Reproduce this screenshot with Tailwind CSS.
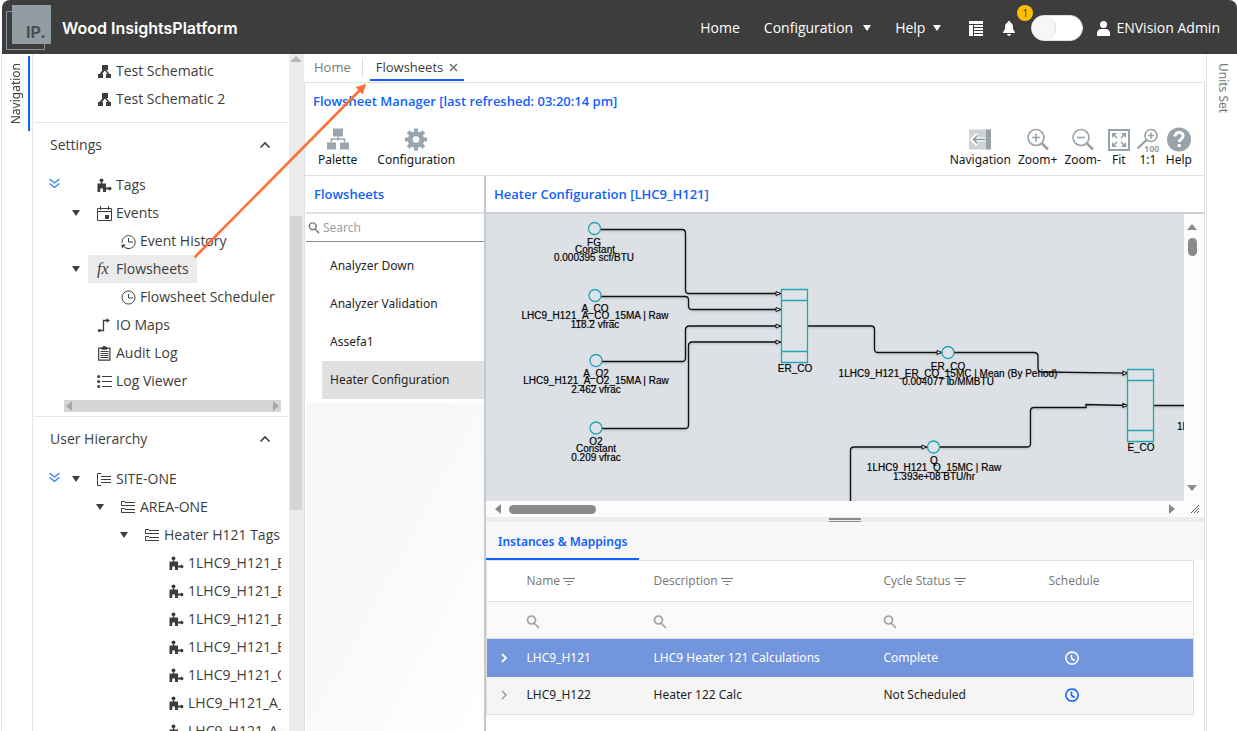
<!DOCTYPE html>
<html lang="en">
<head>
    <meta charset="UTF-8">
    <meta name="viewport" content="width=device-width, initial-scale=1.0">
    <title>Wood InsightsPlatform</title>
    <script src="https://cdn.jsdelivr.net/npm/@tailwindcss/browser@4"></script>
</head>
<body class="relative flex h-screen flex-col overflow-hidden bg-white pl-[2px] font-['Open_Sans',sans-serif] text-sm text-[#3d3d3d]">

    <!-- shared icons -->
    <svg class="hidden">
        <symbol id="i-schematic" viewBox="0 0 15 15"><path d="M5 1h6v5H9.5l3 4H14v4H9v-4h1.500L8 6.500 5 10h1v4H1v-4h1.500l3-4H5z"/></symbol>
        <symbol id="i-tag" viewBox="0 0 15 15"><circle cx="4.500" cy="2.300" r="1.900"/><path d="M3.800 3h1.400v2.500H9V9.500h2.300a1.700 1.700 0 1 1 0 2H9V14H6v-2.300a1.400 1.400 0 0 0-2.800 0V14H.5V5.500h3.300z"/></symbol>
        <symbol id="i-events" viewBox="0 0 15 15"><path d="M.5 2.500h14v12H.5zM.5 5.500h14M3.500 0v4M11.500 0v4" fill="none" stroke="currentColor"/><path d="M8 9h4v4H8z"/></symbol>
        <symbol id="i-clock" viewBox="0 0 15 15"><path d="M7.500 1a6.500 6.500 0 1 0 .01 0zM7.500 4v4H12" fill="none" stroke="currentColor"/></symbol>
        <symbol id="i-history" viewBox="0 0 15 15"><path d="M2.600 12.200A6.500 6.500 0 1 0 1.200 9M7.500 4v4H12M5 14a6.500 6.500 0 0 0 2.500.5" fill="none" stroke="currentColor"/><path d="M.5 10.500h4.200L1 14.500z"/></symbol>
        <symbol id="i-io" viewBox="0 0 15 15"><path d="M2.500 12.500h4v-10h3.500" fill="none" stroke="currentColor" stroke-width="1.300"/><circle cx="2.300" cy="12.500" r="1.500"/><path d="M9.500 .3l3.500 2.200-3.500 2.200z"/></symbol>
        <symbol id="i-audit" viewBox="0 0 15 15"><path d="M1.700 2.200h11.200v12H1.700zM3.500 5.500h8M3.500 7.500h8M3.500 9.500h8M3.500 11.500h8" fill="none" stroke="currentColor" stroke-width="1.200"/><path d="M4.500 1h1.500a1.300 1.300 0 0 1 2.600 0h1.500v2.800H4.500z"/></symbol>
        <symbol id="i-list" viewBox="0 0 15 15"><circle cx="1.700" cy="2.500" r="1.500"/><circle cx="1.700" cy="7.500" r="1.500"/><circle cx="1.700" cy="12.500" r="1.500"/><path d="M5 2.500h10M5 7.500h10M5 12.500h10" fill="none" stroke="currentColor"/></symbol>
        <symbol id="i-site" viewBox="0 0 15 15"><path d="M4 1.500H.5v12H4M4 4.500h10M4 7.500h10M4 10.500h10" fill="none" stroke="currentColor"/></symbol>
        <symbol id="i-area" viewBox="0 0 15 15"><path d="M4 1.500H.5v4H4M4 2.500h10M4 5.500h10M4 8.500H.5v4H4M4 9.500h10M4 12.500h10" fill="none" stroke="currentColor"/></symbol>
        <symbol id="i-expand" viewBox="0 0 10 10"><path d="M.5 1L5 4.500 9.500 1M.5 5L5 8.500 9.500 5" fill="none" stroke="#4285f4" stroke-width="1.300"/></symbol>
        <symbol id="i-tri" viewBox="0 0 8 6"><path d="M0 0h8L4 6z"/></symbol>
        <symbol id="i-search" viewBox="0 0 14 14"><path d="M5.500 1a4 4 0 1 0 .01 0zM8.500 8.500l4.500 4.500" fill="none" stroke="currentColor" stroke-width="1.600"/></symbol>
        <symbol id="i-filter" viewBox="0 0 12 8"><path d="M0 .5h12M2 3.500h8M4.500 6.500h3" fill="none" stroke="currentColor"/></symbol>
        <symbol id="i-collapse" viewBox="0 0 12 8"><path d="M1.500 6.500l4.500-4.500 4.500 4.500" fill="none" stroke="currentColor" stroke-width="1.600"/></symbol>
        <symbol id="i-time" viewBox="0 0 14 14"><path d="M7 .9a6.100 6.100 0 1 0 .01 0zM6.500 3.500V7.500l3.200 2" fill="none" stroke="currentColor" stroke-width="1.500"/></symbol>
    </svg>

    <header class="flex h-[54px] shrink-0 items-center rounded-t-lg bg-[#3d3d3d] pt-[2px] pr-[17px] text-white">
        <svg class="ml-1 h-[46px] w-[46px]" viewBox="0 0 46 46">
            <path d="M.5 6.500h38v38H.5z" fill="none" stroke="#8b979e"/>
            <path d="M6 0h39v39H6z" fill="#919ca3"/>
            <text x="20" y="33" font-family="Inter, sans-serif" font-size="16" font-weight="700" fill="#4a4f52">IP.</text>
        </svg>
        <a href="#" class="ml-[10px] font-['Inter',sans-serif] text-base font-semibold">Wood InsightsPlatform</a>
        <nav class="ml-auto flex items-center">
            <a href="#">Home</a>
            <button class="ml-6 flex items-center gap-2">Configuration <svg class="ml-[2px] h-[6px] w-2 fill-current"><use href="#i-tri"/></svg></button>
            <button class="ml-6 flex items-center gap-2">Help <svg class="h-[6px] w-2 fill-current"><use href="#i-tri"/></svg></button>
            <button class="ml-7" aria-label="News">
                <svg class="h-[15px] w-[14px]" viewBox="0 0 14 15" fill="#fff"><path d="M0 0h14v3H0zM0 4h4v11H0zM5 4h9v2H5zM5 7h9v2H5zM5 10h9v2H5zM5 13h9v2H5z"/></svg>
            </button>
            <button class="relative ml-5" aria-label="Notifications">
                <svg class="h-[15px] w-[12px]" viewBox="0 0 12 15" fill="#fff"><path d="M6 0c1 0 1.300.7 1.300 1.500C9.300 2 10 4 10 6c0 2.500.7 3.700 2 5v1H0v-1c1.300-1.300 2-2.500 2-5 0-2 .7-4 2.700-4.500C4.700.7 5 0 6 0zM4 13h4c0 1-1 1.800-2 1.800S4 14 4 13z"/></svg>
                <span class="absolute -top-4 left-3.5 size-4 rounded-full bg-[#ffbe00] text-center text-[10px] leading-4 text-[#3d3d3d]">1</span>
            </button>
            <input type="checkbox" aria-label="Theme" class="ml-4 flex h-[26px] w-[52px] appearance-none rounded-full border border-[#e0e0e0] bg-white before:block before:h-6 before:w-6 before:rounded-full before:border-r before:border-[#ddd] before:bg-[#f7f7f7]">
            <a href="#" class="ml-[14px] flex items-center gap-[6px]">
                <svg class="h-[15px] w-[13px]" viewBox="0 0 13 15" fill="#fff"><circle cx="6.500" cy="3.500" r="3.500"/><path d="M0 15v-2.500C0 9.500 2 8 4 8h5c2 0 4 1.500 4 4.500V15z"/></svg>
                ENVision Admin
            </a>
        </nav>
    </header>

    <div class="flex min-h-0 flex-1">
        <aside class="-ml-px flex w-8 shrink-0 justify-end border-x border-[#e4e5e8] pr-[2px] pt-[2px]">
            <button class="flex h-[75px] items-center border-r-2 border-[#0f62fe] pr-1 pl-1"><span class="rotate-180 font-['Noto_Sans',sans-serif] text-xs [writing-mode:vertical-rl]">Navigation</span></button>
        </aside>

        <div class="flex w-[256px] shrink-0 flex-col overflow-hidden pl-px">
            <ul class="border-b border-[#e4e5e8] pt-[3px] pb-[9px] pl-[54px]">
                <li class="flex h-7 items-center gap-1 pl-[9px]"><svg class="size-[15px] fill-current"><use href="#i-schematic"/></svg><a href="#">Test Schematic</a></li>
                <li class="flex h-7 items-center gap-1 pl-[9px]"><svg class="size-[15px] fill-current"><use href="#i-schematic"/></svg><a href="#">Test Schematic 2</a></li>
            </ul>

            <section class="border-b border-[#e4e5e8]">
                <button class="flex h-11 w-full items-center justify-between pr-[18px] pl-4">Settings <svg class="h-2 w-3"><use href="#i-collapse"/></svg></button>
                <ul class="mr-2 overflow-hidden pt-1 whitespace-nowrap">
                    <li class="flex h-7 items-center">
                        <button class="ml-[15px] w-[39px]" aria-label="Expand all"><svg class="mb-1 size-[11px]"><use href="#i-expand"/></svg></button>
                        <a href="#" class="flex h-7 items-center gap-1 px-[9px]"><svg class="size-[15px] fill-current"><use href="#i-tag"/></svg>Tags</a>
                    </li>
                    <li class="flex h-7 items-center">
                        <button class="ml-[38px] w-4" aria-label="Toggle"><svg class="h-[6px] w-2 fill-current"><use href="#i-tri"/></svg></button>
                        <a href="#" class="flex h-7 items-center gap-1 px-[9px]"><svg class="size-[15px] fill-current"><use href="#i-events"/></svg>Events</a>
                    </li>
                    <li class="flex h-7 items-center pl-[78px]"><a href="#" class="flex h-7 items-center gap-1 px-[9px]"><svg class="size-[15px] fill-current"><use href="#i-history"/></svg>Event History</a></li>
                    <li class="flex h-7 items-center">
                        <button class="ml-[38px] w-4" aria-label="Toggle"><svg class="h-[6px] w-2 fill-current"><use href="#i-tri"/></svg></button>
                        <a href="#" class="flex h-7 items-center gap-1 bg-[#ebebeb] pr-2 pl-[9px]"><span class="w-[15px] font-['Liberation_Serif',serif] text-base italic">fx</span>Flowsheets</a>
                    </li>
                    <li class="flex h-7 items-center pl-[78px]"><a href="#" class="flex h-7 items-center gap-1 px-[9px]"><svg class="size-[15px] fill-current"><use href="#i-clock"/></svg>Flowsheet Scheduler</a></li>
                    <li class="flex h-7 items-center pl-[54px]"><a href="#" class="flex h-7 items-center gap-1 px-[9px]"><svg class="size-[15px] fill-current"><use href="#i-io"/></svg>IO Maps</a></li>
                    <li class="flex h-7 items-center pl-[54px]"><a href="#" class="flex h-7 items-center gap-1 px-[9px]"><svg class="size-[15px] fill-current"><use href="#i-audit"/></svg>Audit Log</a></li>
                    <li class="flex h-7 items-center pl-[54px]"><a href="#" class="flex h-7 items-center gap-1 px-[9px]"><svg class="size-[15px] fill-current"><use href="#i-list"/></svg>Log Viewer</a></li>
                </ul>
                <div class="mt-[5px] mr-2 mb-1 ml-[30px] flex h-3 items-center justify-between bg-[#d6d6d6] px-[2px]">
                    <svg class="h-[10px] w-[6px] fill-[#a8a8a8]" viewBox="0 0 6 10"><path d="M6 0v10L0 5z"/></svg>
                    <svg class="h-[10px] w-[6px] fill-[#a8a8a8]" viewBox="0 0 6 10"><path d="M0 0v10l6-5z"/></svg>
                </div>
            </section>

            <section>
                <button class="flex h-11 w-full items-center justify-between pr-[18px] pl-4">User Hierarchy <svg class="h-2 w-3"><use href="#i-collapse"/></svg></button>
                <ul class="mr-2 overflow-hidden pt-1 whitespace-nowrap">
                    <li class="flex h-7 items-center">
                        <button class="ml-[15px] w-[23px]" aria-label="Expand all"><svg class="mb-1 size-[11px]"><use href="#i-expand"/></svg></button>
                        <button class="w-4" aria-label="Toggle"><svg class="h-[6px] w-2 fill-current"><use href="#i-tri"/></svg></button>
                        <a href="#" class="flex items-center gap-1 px-[9px]"><svg class="size-[15px]"><use href="#i-site"/></svg>SITE-ONE</a>
                    </li>
                    <li class="flex h-7 items-center">
                        <button class="ml-[62px] w-4" aria-label="Toggle"><svg class="h-[6px] w-2 fill-current"><use href="#i-tri"/></svg></button>
                        <a href="#" class="flex items-center gap-1 px-[9px]"><svg class="size-[15px]"><use href="#i-area"/></svg>AREA-ONE</a>
                    </li>
                    <li class="flex h-7 items-center">
                        <button class="ml-[86px] w-4" aria-label="Toggle"><svg class="h-[6px] w-2 fill-current"><use href="#i-tri"/></svg></button>
                        <a href="#" class="flex items-center gap-1 pl-[9px]"><svg class="size-[15px]"><use href="#i-area"/></svg>Heater H121 Tags</a>
                    </li>
                    <li class="flex h-7 items-center gap-1 pl-[135px]"><svg class="size-[15px] shrink-0 fill-current"><use href="#i-tag"/></svg><a href="#">1LHC9_H121_ER_CO</a></li>
                    <li class="flex h-7 items-center gap-1 pl-[135px]"><svg class="size-[15px] shrink-0 fill-current"><use href="#i-tag"/></svg><a href="#">1LHC9_H121_ER_CO</a></li>
                    <li class="flex h-7 items-center gap-1 pl-[135px]"><svg class="size-[15px] shrink-0 fill-current"><use href="#i-tag"/></svg><a href="#">1LHC9_H121_ER_CO</a></li>
                    <li class="flex h-7 items-center gap-1 pl-[135px]"><svg class="size-[15px] shrink-0 fill-current"><use href="#i-tag"/></svg><a href="#">1LHC9_H121_ER_CO</a></li>
                    <li class="flex h-7 items-center gap-1 pl-[135px]"><svg class="size-[15px] shrink-0 fill-current"><use href="#i-tag"/></svg><a href="#">1LHC9_H121_Q</a></li>
                    <li class="flex h-7 items-center gap-1 pl-[135px]"><svg class="size-[15px] shrink-0 fill-current"><use href="#i-tag"/></svg><a href="#">LHC9_H121_A_CO</a></li>
                    <li class="flex h-7 items-center gap-1 pl-[135px]"><svg class="size-[15px] shrink-0 fill-current"><use href="#i-tag"/></svg><a href="#">LHC9_H121_A_O2</a></li>
                </ul>
            </section>
        </div>

        <!-- sidebar scrollbar -->
        <div class="flex w-[15px] shrink-0 flex-col bg-[#ebebeb]">
            <svg class="mr-auto ml-px mt-[2px] mb-[154px] h-[6px] w-3 shrink-0 fill-[#b5b5b5]" viewBox="0 0 12 6"><path d="M0 6h12L6 0z"/></svg>
            <div class="mr-[2px] ml-px h-[294px] bg-[#d5d5d5]"></div>
        </div>

        <main class="flex min-w-0 flex-1 flex-col font-['Noto_Sans',sans-serif]">
            <nav class="flex h-[29px] shrink-0 items-stretch border-b border-[#e0e2e5] pb-px pl-[10px] font-['Open_Sans',sans-serif] text-[13px]">
                <a href="#" class="flex items-center text-[#76797c]">Home</a>
                <span class="mr-[7px] my-1 ml-[11px] w-px bg-[#dcdcdc]"></span>
                <a href="#" class="flex items-center gap-[6px] border-b-2 border-[#0f62fe] px-[6px] pt-[2px]">Flowsheets
                    <svg class="size-[9px]" viewBox="0 0 9 9"><path d="M1 1l7 7M8 1L1 8" stroke="#777" stroke-width="1.600"/></svg>
                </a>
            </nav>

            <div class="flex min-h-0 flex-1 flex-col border-x border-[#dde1e6]">
                <h1 class="px-2 pt-[9px] font-['Open_Sans',sans-serif] text-[13px] leading-[18px] font-semibold text-[#0f62fe]">Flowsheet Manager [last refreshed: 03:20:14 pm]</h1>
                <div class="mt-[17px] flex h-12 shrink-0 justify-between pr-3 pl-[13px] text-xs text-[#161616]">
                    <div class="flex items-start gap-5">
                        <button class="flex flex-col items-center leading-4">
                            <svg class="h-[25px] w-[22px]" viewBox="0 0 22 22" fill="#9aa5ad"><path d="M6 0h10v8H6zM0 14h9v7H0zM13 14h9v7h-9z"/><path d="M11 8v4M4.500 14v-3.500h13V14" fill="none" stroke="#9aa5ad" stroke-width="1.500"/></svg>Palette
                        </button>
                        <button class="flex flex-col items-center leading-4">
                            <svg class="h-[25px] w-[22px]" viewBox="0 0 22 22" fill="none" stroke="#9aa5ad"><circle cx="11" cy="11" r="5.800" stroke-width="5"/><path d="M11 0v4M11 18v4M0 11h4M18 11h4M3.200 3.200l3 3M15.800 15.800l3 3M3.200 18.800l3-3M15.800 6.200l3-3" stroke-width="4"/></svg>Configuration
                        </button>
                    </div>
                    <div class="flex items-start gap-[7px]">
                        <button class="flex flex-col items-center leading-4">
                            <svg class="h-[25px] w-[22px]" viewBox="0 0 22 24"><path d="M0 2h22v20H0z" fill="#cdd2d4"/><path d="M17 2h5v20h-5z" fill="#98a2a9"/><path d="M16 12H5M8.500 7L3.500 12l5 5" fill="none" stroke="#fff" stroke-width="4"/><path d="M16 12H5M8.500 8L4.500 12l4 4" fill="none" stroke="#8d979e" stroke-width="1.500"/></svg>Navigation
                        </button>
                        <button class="flex flex-col items-center leading-4">
                            <svg class="h-[25px] w-[22px]" viewBox="0 0 22 24" fill="none" stroke="#98a2a9" stroke-width="1.600"><circle cx="9" cy="10" r="8"/><path d="M5 10h8M9 6v8"/><path d="M15 16l6 6" stroke-width="2.600"/></svg>Zoom+
                        </button>
                        <button class="flex flex-col items-center leading-4">
                            <svg class="h-[25px] w-[22px]" viewBox="0 0 22 24" fill="none" stroke="#98a2a9" stroke-width="1.600"><circle cx="9" cy="10" r="8"/><path d="M5 10h8"/><path d="M15 16l6 6" stroke-width="2.600"/></svg>Zoom-
                        </button>
                        <button class="flex flex-col items-center leading-4">
                            <svg class="h-[25px] w-[22px]" viewBox="0 0 22 24" fill="#98a2a9"><path d="M1 2.500h20v20H1z" fill="none" stroke="#98a2a9" stroke-width="2"/><path d="M4 5.500h5L4 10.500zM18 5.500h-5l5 5zM4 19.500h5l-5-5zM18 19.500h-5l5-5z"/><path d="M5 6.500l4 4M17 6.500l-4 4M5 18.500l4-4M17 18.500l-4-4" stroke="#98a2a9" stroke-width="1.600"/></svg>Fit
                        </button>
                        <button class="flex flex-col items-center leading-4">
                            <svg class="h-[25px] w-[22px] overflow-visible" viewBox="0 0 22 24" fill="none" stroke="#98a2a9" stroke-width="1.600"><circle cx="14" cy="8" r="6"/><path d="M11 8h6M14 5v6"/><path d="M9.500 12.500l-9 8.500" stroke-width="2.400"/><text x="7" y="24" font-family="Open Sans, sans-serif" font-size="9" font-weight="700" fill="#98a2a9" stroke="none">100</text></svg>1:1
                        </button>
                        <button class="flex flex-col items-center leading-4">
                            <svg class="h-[25px] w-6" viewBox="0 0 24 24"><circle cx="12" cy="12" r="12" fill="#98a2a9"/><path d="M8 9c0-5.500 8.500-5 8.200-.5C16 11.500 12.300 11.500 12.300 14.500" fill="none" stroke="#fff" stroke-width="3"/><path d="M10.700 16.500h3v3h-3z" fill="#fff"/></svg>Help
                        </button>
                    </div>
                </div>

                <div class="flex min-h-0 flex-1 border-t border-[#dde1e6]">
                    <div class="ml-px flex w-[178px] shrink-0 flex-col">
                        <h2 class="flex h-[38px] shrink-0 items-center border-b-2 border-[#dde1e6] px-2 font-['Open_Sans',sans-serif] text-[13px] font-semibold text-[#0f62fe]">Flowsheets</h2>
                        <label class="flex h-7 shrink-0 items-center gap-[3px] border-b border-[#8d8d8d] pl-[2px] text-[#757575]">
                            <svg class="size-3"><use href="#i-search" /></svg>
                            <input type="search" placeholder="Search" aria-label="Search" class="min-w-0 flex-1 text-xs outline-none placeholder:text-[#a0a0a0]">
                        </label>
                        <ul class="pt-[5px] pl-4 text-xs text-[#1f1f1f]">
                            <li><a href="#" class="flex h-[38px] items-center px-2">Analyzer Down</a></li>
                            <li><a href="#" class="flex h-[38px] items-center px-2">Analyzer Validation</a></li>
                            <li><a href="#" class="flex h-[38px] items-center px-2">Assefa1</a></li>
                            <li><a href="#" class="flex h-[38px] items-center bg-[#e0e0e0] px-2">Heater Configuration</a></li>
                        </ul>
                        <div class="mt-1 flex-1 bg-linear-to-br from-[#f8f8f8] from-40% to-white"></div>
                    </div>

                    <div class="flex min-w-0 flex-1 flex-col border-l-2 border-[#c6cacd]">
                        <h2 class="flex h-[38px] shrink-0 items-center border-b-2 border-[#cdd1d5] px-2 font-['Open_Sans',sans-serif] text-[13px] font-semibold text-[#0f62fe]">Heater Configuration [LHC9_H121]</h2>

                        <div class="flex h-[287px] shrink-0">
                            <div class="relative flex-1 overflow-hidden bg-[#dde1e6]">
                                <svg class="absolute top-0 left-0 h-[500px] w-[1000px]" viewBox="486 214 1000 500">
                                    <defs>
                                        <marker id="arrow" viewBox="0 0 6 6" refX="6" refY="3" markerWidth="6" markerHeight="6" markerUnits="userSpaceOnUse" orient="auto"><path d="M1 1l4.500 2L1 5z" fill="#fff" stroke="#111"/></marker>
                                    </defs>
                                    <g class="fill-none stroke-[#111] drop-shadow-[0_1px_1px_#0003]" stroke-width="1.300">
                                        <path d="M600 229.500H682q3.500 0 3.500 3.500V290q0 3.500 3.500 3.500H781" marker-end="url(#arrow)"/>
                                        <path d="M601 296.500H685q3.500 0 3.500 3.500V306q0 3.500 3.500 3.500H781" marker-end="url(#arrow)"/>
                                        <path d="M602 361.500H682q3.500 0 3.500-3.500V330q0-4 4-4H781" marker-end="url(#arrow)"/>
                                        <path d="M602 428.500H685q3.500 0 3.500-3.500V346q0-4 4-4H781" marker-end="url(#arrow)"/>
                                        <path d="M807 326H871q3.500 0 3.500 3.500V349q0 3.500 3.500 3.500H942" marker-end="url(#arrow)"/>
                                        <path d="M954 352.500H1034q4 0 4 4V368q0 4 4 4L1128 373.200" marker-end="url(#arrow)"/>
                                        <path d="M850.500 520V450.500q0-3.500 3.500-3.500H927" marker-end="url(#arrow)"/>
                                        <path d="M940 447H1027q3.500 0 3.500-3.500V411q0-3.500 3.500-3.500H1086V404.500L1128 405.500" marker-end="url(#arrow)"/>
                                        <path d="M1153 405.500H1300"/>
                                    </g>
                                    <g class="fill-[#dfe3e7] stroke-[#22a6b3]" stroke-width="1.300">
                                        <circle cx="594.500" cy="228.500" r="6"/>
                                        <circle cx="595" cy="295.500" r="6"/>
                                        <circle cx="596" cy="360.500" r="6"/>
                                        <circle cx="596" cy="428" r="6"/>
                                        <circle cx="948" cy="352.500" r="6"/>
                                        <circle cx="933.500" cy="447" r="6"/>
                                        <path d="M781.500 289.500h26v73h-26zM781.500 300.500h26M781.500 351.500h26"/>
                                        <path d="M1127.500 369.500h26v72h-26zM1127.500 380.500h26M1127.500 430.500h26"/>
                                    </g>
                                    <g class="fill-black font-['Liberation_Sans',sans-serif] text-[10px] text-shadow-[0_0_1px_#0006]" text-anchor="middle">
                                        <text x="594" y="246">FG</text><text x="595" y="253">Constant</text><text x="594" y="261">0.000395 scf/BTU</text>
                                        <text x="595" y="312">A_CO</text><text x="595" y="319">LHC9_H121_A_CO_15MA | Raw</text><text x="595" y="328">118.2 vfrac</text>
                                        <text x="596" y="377">A_O2</text><text x="596" y="384">LHC9_H121_A_O2_15MA | Raw</text><text x="596" y="393">2.462 vfrac</text>
                                        <text x="596" y="445">O2</text><text x="596" y="452">Constant</text><text x="596" y="461">0.209 vfrac</text>
                                        <text x="795" y="372">ER_CO</text>
                                        <text x="948" y="370">ER_CO</text><text x="948" y="377">1LHC9_H121_ER_CO_15MC | Mean (By Period)</text><text x="948" y="385">0.004077 lb/MMBTU</text>
                                        <text x="934" y="464">Q</text><text x="934" y="471">1LHC9_H121_Q_15MC | Raw</text><text x="934" y="480">1.393e+08 BTU/hr</text>
                                        <text x="1141" y="451">E_CO</text>
                                        <text x="1177" y="430" text-anchor="start">1LHC9_H121_E_CO</text>
                                    </g>
                                </svg>
                            </div>
                            <div class="flex w-5 flex-col items-center bg-[#fcfcfc] py-[10px] pr-1">
                                <svg class="h-[6px] w-[10px] fill-[#8a8a8a]" viewBox="0 0 10 6"><path d="M0 6h10L5 0z"/></svg>
                                <div class="mt-2 h-[18px] w-[9px] rounded-full bg-[#8a8a8a]"></div>
                                <svg class="mt-auto h-[6px] w-[10px] fill-[#8a8a8a]" viewBox="0 0 10 6"><path d="M0 0h10L5 6z"/></svg>
                            </div>
                        </div>
                        <div class="flex h-4 shrink-0 items-center bg-[#fcfcfc] pr-[5px] pl-[9px]">
                            <svg class="h-[10px] w-[6px] fill-[#8a8a8a]" viewBox="0 0 6 10"><path d="M6 0v10L0 5z"/></svg>
                            <div class="ml-2 h-[9px] w-[87px] rounded-full bg-[#8a8a8a]"></div>
                            <svg class="ml-auto h-[10px] w-[6px] fill-[#8a8a8a]" viewBox="0 0 6 10"><path d="M0 0v10l6-5z"/></svg>
                            <svg class="ml-4 size-2" viewBox="0 0 8 8"><path d="M0 8l8-8M3 8l5-5M6 8l2-2" stroke="#555"/></svg>
                        </div>
                        <div class="flex h-[5px] shrink-0 flex-col items-center gap-px bg-[#ededed] pt-px">
                            <span class="h-[2px] w-8 bg-[#8a8a8a]"></span><span class="h-px w-8 bg-[#8a8a8a]"></span>
                        </div>
                        <div class="h-[38px] shrink-0 bg-[#f7f7f7]">
                            <button class="h-full border-b-2 border-[#0f62fe] px-3 pt-1 text-xs font-semibold text-[#0f62fe]">Instances &amp; Mappings</button>
                        </div>

                        <div class="pr-[10px]">
                            <table class="w-full table-fixed border border-[#e0e0e0] text-left text-xs text-[#1f1f1f]">
                                <colgroup><col class="w-8"><col class="w-[127px]"><col class="w-[230px]"><col class="w-[165px]"><col></colgroup>
                                <thead class="font-['Open_Sans',sans-serif] text-[#757575]">
                                    <tr class="h-[41px] border-b border-[#e0e0e0]">
                                        <th></th>
                                        <th class="px-2 font-normal">Name <svg class="inline h-2 w-3"><use href="#i-filter"/></svg></th>
                                        <th class="px-2 font-normal">Description <svg class="inline h-2 w-3"><use href="#i-filter"/></svg></th>
                                        <th class="px-2 font-normal">Cycle Status <svg class="inline h-2 w-3"><use href="#i-filter"/></svg></th>
                                        <th class="px-2 font-normal">Schedule</th>
                                    </tr>
                                    <tr class="h-[37px] border-b border-[#e0e0e0] bg-[#fafafa]">
                                        <td></td>
                                        <td class="px-[7px]"><label class="flex items-center pt-1 text-[#a0a0a0]"><svg class="size-[14px] shrink-0"><use href="#i-search"/></svg><input aria-label="Filter name" class="w-full min-w-0 outline-none"></label></td>
                                        <td class="px-[7px]"><label class="flex items-center pt-1 text-[#a0a0a0]"><svg class="size-[14px] shrink-0"><use href="#i-search"/></svg><input aria-label="Filter description" class="w-full min-w-0 outline-none"></label></td>
                                        <td class="px-[7px]"><label class="flex items-center pt-1 text-[#a0a0a0]"><svg class="size-[14px] shrink-0"><use href="#i-search"/></svg><input aria-label="Filter cycle status" class="w-full min-w-0 outline-none"></label></td>
                                        <td></td>
                                    </tr>
                                </thead>
                                <tbody>
                                    <tr class="h-[38px] bg-[#7295dd] text-white">
                                        <td class="pl-[14px]"><button class="block" aria-label="Expand"><svg class="h-[10px] w-[6px]" viewBox="0 0 6 10"><path d="M1 1l4 4-4 4" fill="none" stroke="#fff" stroke-width="1.800"/></svg></button></td>
                                        <td class="px-2">LHC9_H121</td>
                                        <td class="px-2">LHC9 Heater 121 Calculations</td>
                                        <td class="px-2">Complete</td>
                                        <td class="pl-6"><button class="block" aria-label="Schedule"><svg class="size-[14px]"><use href="#i-time"/></svg></button></td>
                                    </tr>
                                    <tr class="h-[38px] bg-[#f5f5f5]">
                                        <td class="pl-[14px]"><button class="block" aria-label="Expand"><svg class="h-[10px] w-[6px]" viewBox="0 0 6 10"><path d="M1 1l4 4-4 4" fill="none" stroke="#999" stroke-width="1.500"/></svg></button></td>
                                        <td class="px-2">LHC9_H122</td>
                                        <td class="px-2">Heater 122 Calc</td>
                                        <td class="px-2">Not Scheduled</td>
                                        <td class="pl-6 text-[#0f62fe]"><button class="block" aria-label="Schedule"><svg class="size-[14px]"><use href="#i-time"/></svg></button></td>
                                    </tr>
                                </tbody>
                            </table>
                        </div>
                    </div>
                </div>
            </div>
        </main>

        <aside class="ml-px flex w-[31px] shrink-0 items-start border-l border-[#e4e5e8] pt-[9px] pl-2">
            <button class="font-['Noto_Sans',sans-serif] text-xs text-[#76797c] [writing-mode:vertical-rl]">Units Set</button>
        </aside>
    </div>

    <!-- callout arrow from the tree item to its tab -->
    <svg class="pointer-events-none absolute top-20 left-48 h-[180px] w-[180px]" viewBox="192 80 180 180">
        <path d="M195.500 256.500L360 90" stroke="#ff7038" stroke-width="2.600" stroke-linecap="round"/>
        <path d="M365 85L362.500 93L357 87.500z" fill="#ff7038" stroke="#ff7038" stroke-width="1.500"/>
    </svg>
</body>
</html>
